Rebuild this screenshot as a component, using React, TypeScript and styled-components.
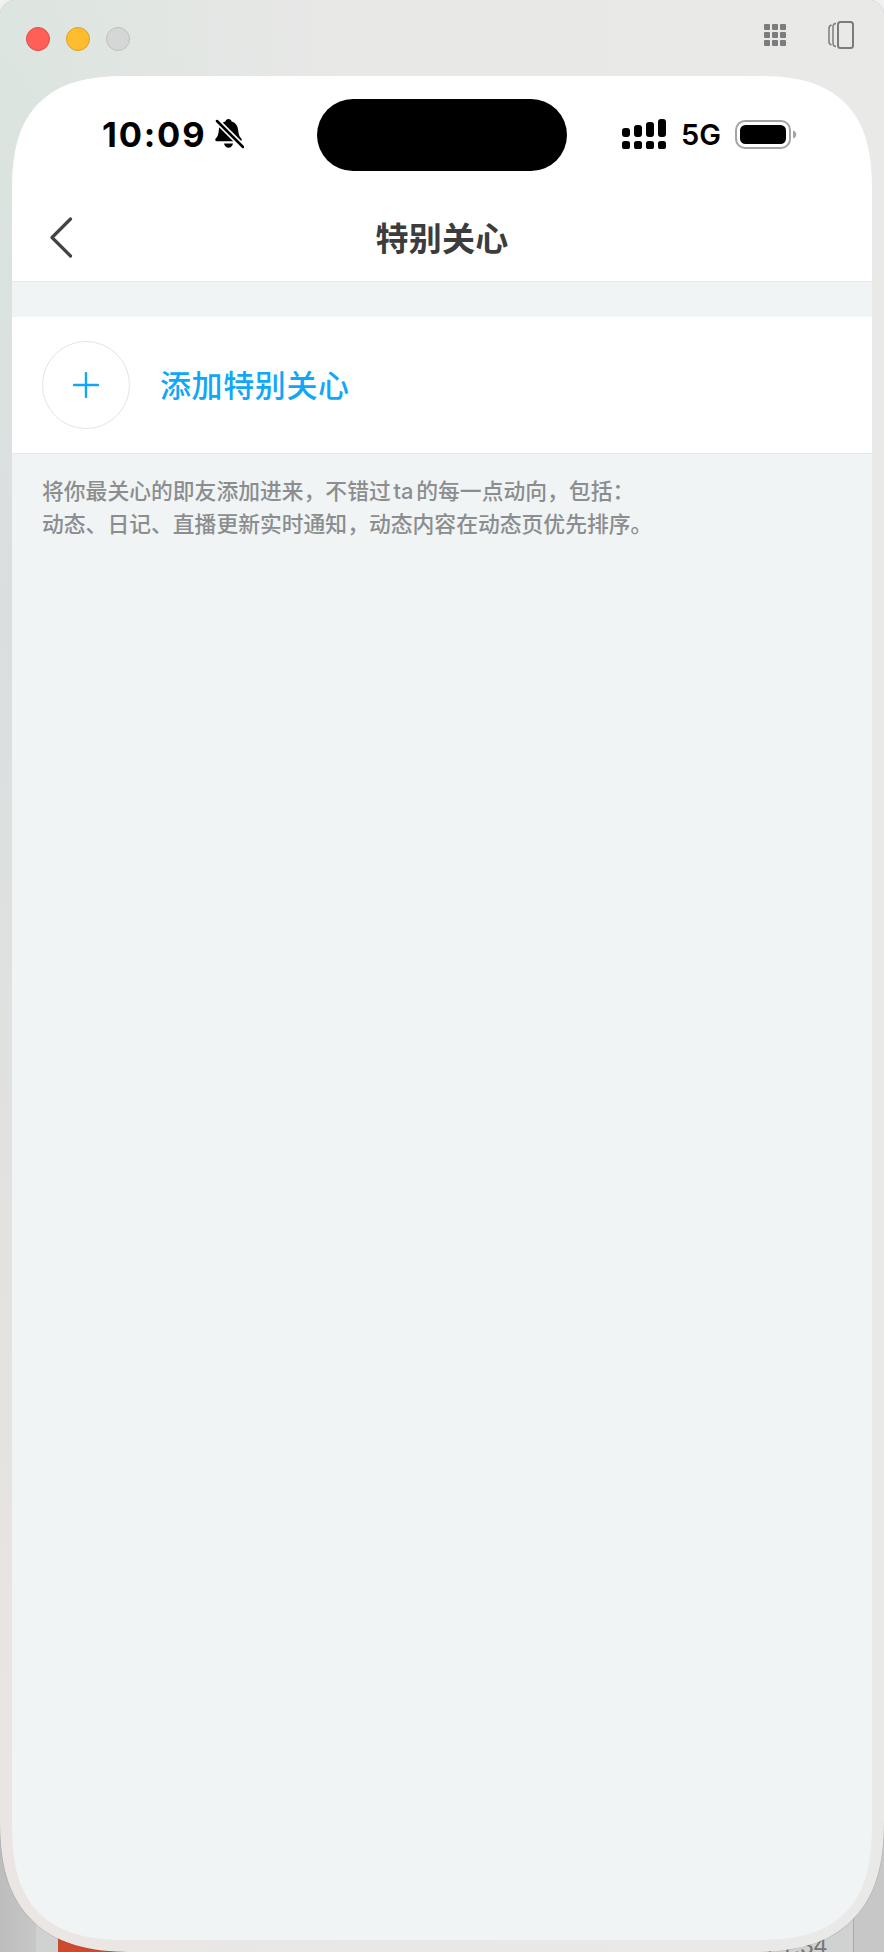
import styled, { createGlobalStyle } from 'styled-components';

const GlobalStyle = createGlobalStyle`
  html, body {
    margin: 0;
    padding: 0;
  }

  body {
    background: #c4c5c4;
    font-family: Inter, 'Noto Sans CJK SC', sans-serif;
  }
`;

const Desktop = styled.div`
  position: relative;
  width: 884px;
  height: 1952px;
  overflow: hidden;
  background:
    linear-gradient(180deg, #f1f1f1 0, #f1f1f1 50%, transparent 80%),
    linear-gradient(90deg, #bcbdbc 0, #c6c7c6 36px, #c6c7c6 100%);
`;

const BackWindow = styled.div`
  position: absolute;
  left: 36px;
  right: 30px;
  bottom: 0;
  height: 60px;
  display: flex;
  justify-content: space-between;
  align-items: flex-end;
  padding-left: 22px;
  background: #d0d1d1;
  border-right: 1px solid #a9a9a9;
`;

const BackThumb = styled.div`
  width: 72px;
  height: 15px;
  background: #cb4a30;
`;

const BackClock = styled.span`
  margin-right: 26px;
  margin-bottom: -6px;
  color: #757575;
  font-family: 'Liberation Sans', sans-serif;
  font-size: 24px;
  line-height: 24px;
`;

const WindowFrame = styled.div`
  position: relative;
  height: 100%;
  box-sizing: border-box;
  display: flex;
  flex-direction: column;
  padding: 0 12px 12px;
  border-radius: 16px 16px 135px 135px;
  corner-bottom-left-shape: superellipse(1.36);
  corner-bottom-right-shape: superellipse(1.36);
  box-shadow: 0 0 1px rgba(0, 0, 0, 0.45);
  background:
    linear-gradient(90deg, rgba(232, 232, 231, 0) 0, #e8e8e7 38%, #e9e9e8 100%),
    linear-gradient(180deg, #dce5df 0, #d9dfdf 32%, #e2e2df 62%, #ece6e3 100%);
`;

const TitleBar = styled.div`
  flex: none;
  height: 76px;
  display: flex;
  align-items: center;
  padding: 0 18px 0 14px;
`;

const TrafficLights = styled.div`
  display: flex;
  gap: 16px;
  margin-top: 2px;
`;

const Light = styled.span<{ $fill: string; $edge: string }>`
  width: 24px;
  height: 24px;
  box-sizing: border-box;
  border-radius: 50%;
  background: ${({ $fill }) => $fill};
  border: 1px solid ${({ $edge }) => $edge};
`;

const TitleTools = styled.div`
  margin-left: auto;
  display: flex;
  align-items: center;
  gap: 42px;
  margin-top: -6px;
`;

const Phone = styled.div`
  flex: 1;
  display: flex;
  flex-direction: column;
  overflow: hidden;
  border-radius: 120px;
  corner-shape: superellipse(1.44);
  background: #f0f4f5;
`;

const StatusBar = styled.div`
  flex: none;
  height: 124px;
  box-sizing: border-box;
  padding-top: 23px;
  display: grid;
  grid-template-columns: 1fr 250px 1fr;
  align-items: start;
  background: #fff;
`;

const StatusLeft = styled.div`
  height: 72px;
  display: flex;
  align-items: center;
  gap: 8px;
  padding-left: 90px;
`;

const Time = styled.span`
  color: #000;
  font-size: 34.5px;
  font-weight: 700;
  line-height: 72px;
  letter-spacing: 1.8px;
`;

const Island = styled.div`
  height: 72px;
  border-radius: 36px;
  background: #000;
`;

const StatusRight = styled.div`
  height: 72px;
  display: flex;
  align-items: center;
  padding-left: 55px;
`;

const Network = styled.span`
  margin: 0 14px 0 13px;
  color: #000;
  font-size: 29px;
  font-weight: 600;
  line-height: 72px;
`;

const NavBar = styled.div`
  flex: none;
  height: 81px;
  display: flex;
  align-items: center;
  justify-content: center;
  position: relative;
  background: #fff;
  border-bottom: 1px solid #e6e8e9;
`;

const BackButton = styled.button`
  position: absolute;
  left: 36px;
  top: 16px;
  padding: 0;
  display: flex;
  border: 0;
  background: none;
`;

const NavTitle = styled.h1`
  margin: -4px 0 0;
  color: #3c3c3c;
  font-size: 33px;
  font-weight: 700;
  line-height: 80px;
  letter-spacing: 0.3px;
`;

const AddRow = styled.div`
  flex: none;
  height: 137px;
  box-sizing: border-box;
  margin-top: 35px;
  display: flex;
  align-items: center;
  gap: 30px;
  padding-left: 30px;
  background: #fff;
  border-bottom: 1px solid #e6e8e9;
`;

const AddCircle = styled.div`
  width: 88px;
  height: 88px;
  box-sizing: border-box;
  display: flex;
  align-items: center;
  justify-content: center;
  border: 1px solid #e4e4e4;
  border-radius: 50%;
`;

const AddLabel = styled.span`
  padding-top: 2px;
  color: #12a7f6;
  font-size: 31px;
  font-weight: 500;
  line-height: 40px;
  letter-spacing: 0.6px;
`;

const Hint = styled.p`
  margin: 0;
  padding: 21px 30px 0;
  color: #8b8d8f;
  font-size: 21.8px;
  font-weight: 500;
  line-height: 33px;
  word-spacing: -3px;
`;

const BellOffIcon = () => (
  <svg width="30" height="32" viewBox="0 0 30 32">
    <path
      d="M14.500 0c1.700 0 2.800 1 3.100 2.400 4.200 1.200 6.200 4.500 6.600 8.800.3 3.700 1 6.200 3.100 8.300.9.900.4 2.800-1.100 2.800H2.800c-1.500 0-2-1.900-1.100-2.800 2.100-2.100 2.800-4.600 3.100-8.300.4-4.300 2.400-7.600 6.600-8.800.3-1.400 1.400-2.400 3.100-2.400z"
      fill="#000"
    />
    <path d="M10 24.500h9c-.5 2.600-2.200 4.300-4.500 4.300s-4-1.700-4.500-4.300z" fill="#000" />
    <path d="M3 2L29 28" stroke="#fff" strokeWidth="6" />
    <path d="M3 2L29 28" stroke="#000" strokeWidth="2.500" strokeLinecap="round" />
  </svg>
);

const SignalIcon = () => (
  <svg width="46" height="32" viewBox="0 0 46 32">
    <g fill="#000">
      {[0, 12, 24, 36].map((x) => (
        <rect key={x} x={x} y="22" width="8" height="8" rx="2.600" />
      ))}
      <rect x="0" y="9" width="8" height="9" rx="3" />
      <rect x="12" y="6" width="8" height="12" rx="3" />
      <rect x="24" y="3" width="8" height="15" rx="3" />
      <rect x="36" y="0" width="8" height="18" rx="3" />
    </g>
  </svg>
);

const BatteryIcon = () => (
  <svg width="63" height="30" viewBox="0 0 63 30">
    <rect x="1" y="1" width="54" height="27" rx="9" fill="none" stroke="#a3a3a3" strokeWidth="2" />
    <rect x="5" y="5" width="46" height="19" rx="5.500" fill="#000" />
    <path d="M58 10.500c2 .6 3.200 2 3.200 4s-1.200 3.400-3.200 4z" fill="#a3a3a3" />
  </svg>
);

const AppGridIcon = () => (
  <svg width="22" height="22" viewBox="0 0 22 22">
    <g fill="#7c7c7c">
      {[0, 8, 16].flatMap((y) =>
        [0, 8, 16].map((x) => <rect key={`${x}-${y}`} x={x} y={y} width="6" height="6" rx="1" />),
      )}
    </g>
  </svg>
);

const DeviceStackIcon = () => (
  <svg width="26" height="28" viewBox="0 0 26 28" fill="none" stroke="#7c7c7c">
    <rect x="10" y="1" width="15" height="26" rx="2.500" strokeWidth="2" />
    <path d="M8 2.500C6 2.500 5 3.500 5 6v16c0 2.500 1 3.500 3 3.500" strokeWidth="1.500" />
    <path d="M3.500 4C1.800 4.500 1 5.500 1 7.500v13c0 2 .8 3 2.500 3.500" strokeWidth="1.500" />
  </svg>
);

const ChevronIcon = () => (
  <svg width="26" height="44" viewBox="0 0 26 44" fill="none">
    <path d="M22.500 3L4 21.500 22.500 40" stroke="#444" strokeWidth="3.200" strokeLinecap="round" strokeLinejoin="round" />
  </svg>
);

const PlusIcon = () => (
  <svg width="26" height="26" viewBox="0 0 26 26">
    <path d="M13 1v24M1 13h24" stroke="#12a7f6" strokeWidth="2.400" strokeLinecap="round" />
  </svg>
);

export default function App() {
  return (
    <>
      <GlobalStyle />
      <Desktop>
        <BackWindow>
          <BackThumb />
          <BackClock>21:34</BackClock>
        </BackWindow>
        <WindowFrame>
          <TitleBar>
            <TrafficLights>
              <Light $fill="#ff5f57" $edge="#e5493f" />
              <Light $fill="#febc2e" $edge="#dfa023" />
              <Light $fill="#d5d7d6" $edge="#bfc1c0" />
            </TrafficLights>
            <TitleTools>
              <AppGridIcon />
              <DeviceStackIcon />
            </TitleTools>
          </TitleBar>
          <Phone>
            <StatusBar>
              <StatusLeft>
                <Time>10:09</Time>
                <BellOffIcon />
              </StatusLeft>
              <Island />
              <StatusRight>
                <SignalIcon />
                <Network>5G</Network>
                <BatteryIcon />
              </StatusRight>
            </StatusBar>
            <NavBar>
              <BackButton aria-label="返回">
                <ChevronIcon />
              </BackButton>
              <NavTitle>特别关心</NavTitle>
            </NavBar>
            <AddRow>
              <AddCircle>
                <PlusIcon />
              </AddCircle>
              <AddLabel>添加特别关心</AddLabel>
            </AddRow>
            <Hint>
              将你最关心的即友添加进来，不错过 ta 的每一点动向，包括：
              <br />
              动态、日记、直播更新实时通知，动态内容在动态页优先排序。
            </Hint>
          </Phone>
        </WindowFrame>
      </Desktop>
    </>
  );
}
